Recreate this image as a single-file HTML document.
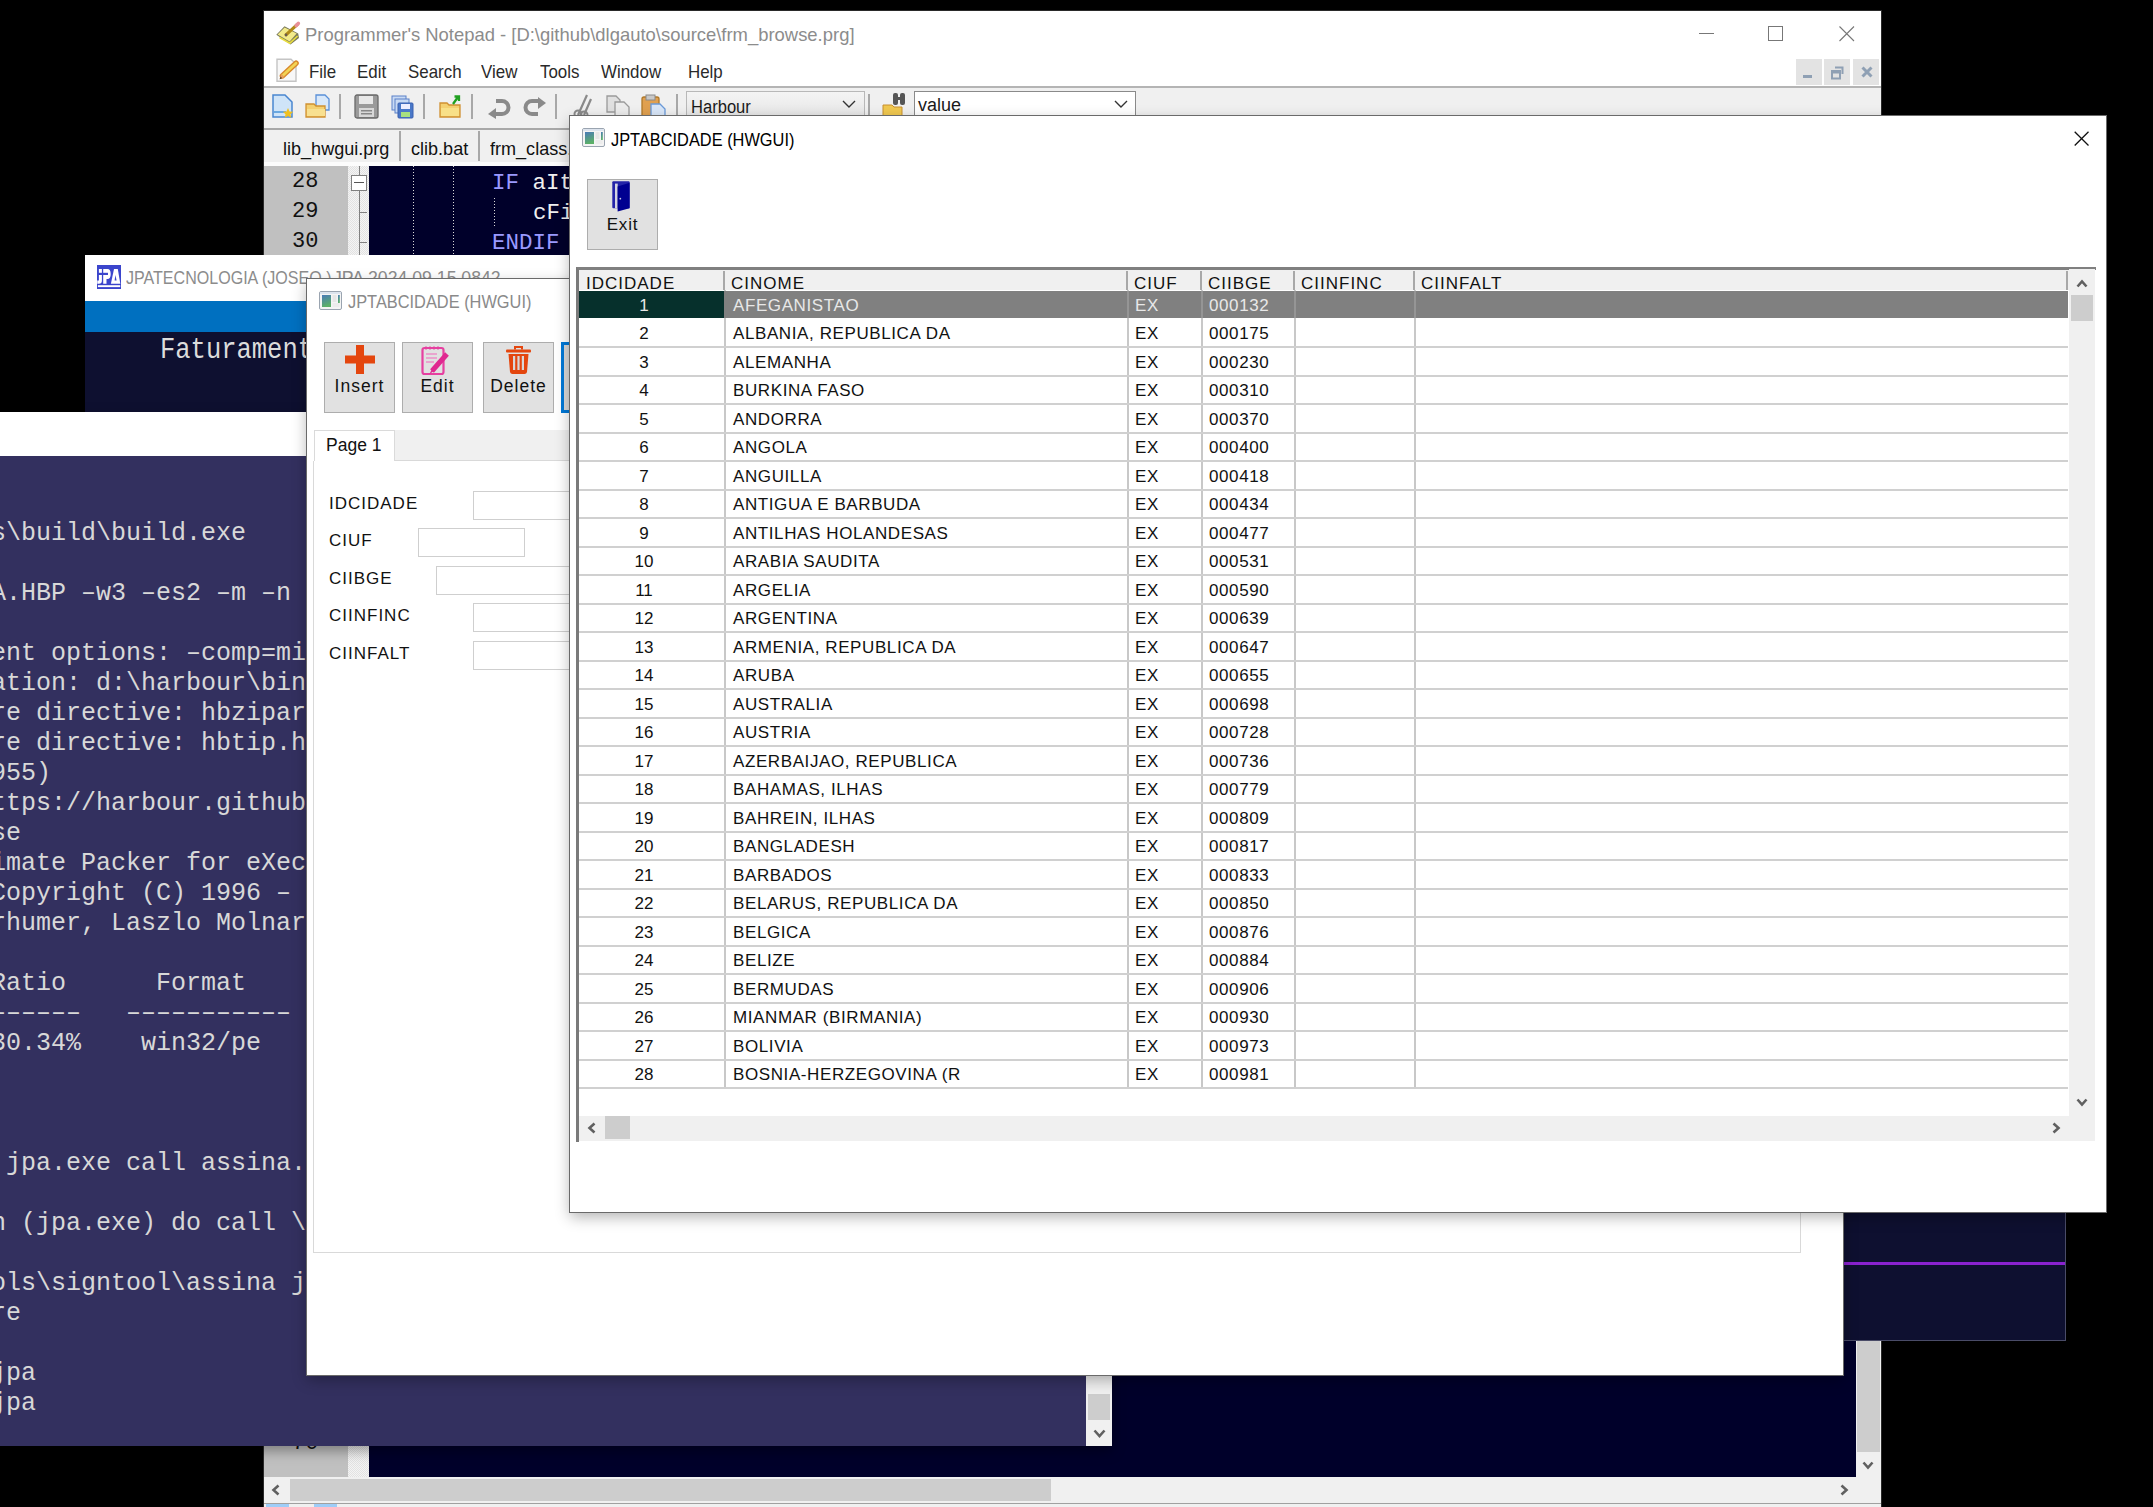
<!DOCTYPE html><html><head><meta charset="utf-8"><style>
*{margin:0;padding:0;box-sizing:border-box}
html,body{width:2153px;height:1507px;overflow:hidden;background:#000;font-family:"Liberation Sans",sans-serif}
.a{position:absolute}
.win{overflow:hidden}
.t{white-space:pre;line-height:1}
.m{font-family:Liberation Mono,monospace}
svg{position:absolute;overflow:visible}
</style></head><body><div class="a win" id="pn" style="left:264px;top:11px;width:1617px;height:1496px;background:#fff;box-shadow:0 0 0 1px #2a2a2a"><div class="a" style="left:12px;top:10px;"><svg width="26" height="26" viewBox="0 0 26 26">
<path d="M0.3 13.8 L8.5 5.2 L22.2 12.5 L23 17 L14.5 23.5 Z" fill="#7a7a5a"/>
<path d="M1.6 13.6 L8.6 6.6 L20.6 12.6 L13.6 20.6 Z" fill="#f2ea8a"/>
<path d="M3.5 16.5 L13.8 22.2 L21.6 15" stroke="#e8dc40" stroke-width="1.6" fill="none"/>
<path d="M10.2 13.6 L21.4 3.4" stroke="#b08a18" stroke-width="3.2" stroke-linecap="round"/>
<path d="M20.2 4.6 L22.3 2.4" stroke="#e89098" stroke-width="3.6" stroke-linecap="round"/>
<circle cx="10" cy="14" r="1.4" fill="#6a5a4a"/>
</svg></div><div class="a t" style="left:41px;top:14px;font-size:19px;color:#8c8c8c;transform:scaleX(0.97);transform-origin:0 0">Programmer's Notepad - [D:\github\dlgauto\source\frm_browse.prg]</div><div class="a" style="left:1435px;top:22px;width:15px;height:1px;background:#777"></div><div class="a" style="left:1504px;top:15px;width:15px;height:15px;border:1px solid #777"></div><div class="a" style="left:1575px;top:15px;"><svg width="16" height="16"><path d="M0.5 0.5 L15 15 M15 0.5 L0.5 15" stroke="#777" stroke-width="1.1"/></svg></div><div class="a" style="left:12px;top:47px;"><svg width="24" height="24" viewBox="0 0 24 24">
<path d="M1 1.2 H15 L20 6 V23.3 H1 Z" fill="#f8f8f8" stroke="#c4c4c4" stroke-width="1.4"/>
<path d="M6.5 17.8 L20 5.2" stroke="#d8882c" stroke-width="5.6" stroke-linecap="round"/>
<path d="M6.5 17.8 L20 5.2" stroke="#f2d454" stroke-width="2.8" stroke-linecap="round"/>
<path d="M3.6 21.2 L5.6 16 L8.6 19 Z" fill="#e8a060"/>
<path d="M3.6 21.2 L4.6 18.6 L6.2 20.2 Z" fill="#5a3a18"/>
</svg></div><div class="a t" style="left:45px;top:51px;font-size:19px;color:#2a2a2a;transform:scaleX(0.89);transform-origin:0 0">File</div><div class="a t" style="left:93px;top:51px;font-size:19px;color:#2a2a2a;transform:scaleX(0.89);transform-origin:0 0">Edit</div><div class="a t" style="left:144px;top:51px;font-size:19px;color:#2a2a2a;transform:scaleX(0.89);transform-origin:0 0">Search</div><div class="a t" style="left:217px;top:51px;font-size:19px;color:#2a2a2a;transform:scaleX(0.89);transform-origin:0 0">View</div><div class="a t" style="left:276px;top:51px;font-size:19px;color:#2a2a2a;transform:scaleX(0.89);transform-origin:0 0">Tools</div><div class="a t" style="left:337px;top:51px;font-size:19px;color:#2a2a2a;transform:scaleX(0.89);transform-origin:0 0">Window</div><div class="a t" style="left:424px;top:51px;font-size:19px;color:#2a2a2a;transform:scaleX(0.89);transform-origin:0 0">Help</div><div class="a" style="left:1532px;top:48px;width:26px;height:26px;background:#e3e3e3"></div><div class="a" style="left:1560px;top:48px;width:26px;height:26px;background:#e3e3e3"></div><div class="a" style="left:1589px;top:48px;width:26px;height:26px;background:#e3e3e3"></div><div class="a" style="left:1539px;top:64px;width:9px;height:3px;background:#8fa0b4"></div><div class="a" style="left:1567px;top:55px;"><svg width="14" height="14"><path d="M4 1.5 H11.5 V8" stroke="#8fa0b4" stroke-width="2" fill="none"/><rect x="1" y="5" width="8" height="7.5" stroke="#8fa0b4" stroke-width="2" fill="none"/><rect x="1" y="5" width="8" height="2.5" fill="#8fa0b4"/></svg></div><div class="a" style="left:1597px;top:55px;"><svg width="12" height="12"><path d="M1.5 1.5 L10.5 10.5 M10.5 1.5 L1.5 10.5" stroke="#8fa0b4" stroke-width="3"/></svg></div><div class="a" style="left:0px;top:75px;width:1617px;height:2px;background:#b4b4b4"></div><div class="a" style="left:0px;top:77px;width:1617px;height:41px;background:#f0f0f0"></div><div class="a" style="left:75px;top:83px;width:2px;height:25px;background:#a8a8a8"></div><div class="a" style="left:159px;top:83px;width:2px;height:25px;background:#a8a8a8"></div><div class="a" style="left:207px;top:83px;width:2px;height:25px;background:#a8a8a8"></div><div class="a" style="left:291px;top:83px;width:2px;height:25px;background:#a8a8a8"></div><div class="a" style="left:412px;top:83px;width:2px;height:25px;background:#a8a8a8"></div><div class="a" style="left:604px;top:83px;width:2px;height:25px;background:#a8a8a8"></div><div class="a" style="left:0px;top:77px;width:420px;height:40px">
<svg style="left:7px;top:6px" width="24" height="25" viewBox="0 0 24 25"><path d="M2 1 H14 L21 8 V23 H2 Z" fill="#cfe4f8" stroke="#4a86d0" stroke-width="1.5"/><rect x="3" y="17" width="12" height="2" fill="#6aa8e0"/><path d="M17 14 l1.6 3.4 3.6.4-2.7 2.4.8 3.6-3.3-1.9-3.3 1.9.8-3.6-2.7-2.4 3.6-.4z" fill="#f0c020"/></svg>
<svg style="left:41px;top:6px" width="26" height="25" viewBox="0 0 26 25"><path d="M11 1 H20 L24 5 V16 H11 Z" fill="#d8e8fa" stroke="#5a90d8" stroke-width="1.3"/><path d="M1 10 H9 L11 12 H20 V23 H1 Z" fill="#f4d070" stroke="#d09030" stroke-width="1.3"/><rect x="2" y="15" width="18" height="7" fill="#f8e090"/></svg>
<svg style="left:90px;top:6px" width="25" height="25" viewBox="0 0 25 25"><rect x="1" y="1" width="23" height="23" rx="2" fill="#9a9a9a" stroke="#6a6a6a" stroke-width="1.3"/><rect x="5" y="2" width="14" height="8" fill="#e8e8e8"/><rect x="5" y="14" width="15" height="9" fill="#d8d8d8"/><rect x="7" y="16" width="11" height="1.5" fill="#888"/><rect x="7" y="19" width="11" height="1.5" fill="#888"/></svg>
<svg style="left:127px;top:7px" width="23" height="24" viewBox="0 0 23 24"><rect x="1" y="1" width="14" height="14" fill="#c8daf4" stroke="#5a80c8"/><rect x="4" y="4" width="14" height="14" fill="#c8daf4" stroke="#5a80c8"/><rect x="7" y="8" width="15" height="15" rx="1" fill="#4a78c8" stroke="#3a60b0"/><rect x="10" y="9" width="9" height="5" fill="#eef"/><rect x="10" y="17" width="9" height="5" fill="#a8e080"/></svg>
<svg style="left:175px;top:6px" width="23" height="25" viewBox="0 0 23 25"><path d="M1 9 H8 L10 11 H21 V23 H1 Z" fill="#f4d070" stroke="#d09030" stroke-width="1.3"/><rect x="2" y="14" width="18" height="8" fill="#f8e088"/><path d="M14 10 L19 3 M15.5 2.5 H20 V7" stroke="#20a020" stroke-width="2.3" fill="none"/></svg>
<svg style="left:223px;top:9px" width="24" height="22" viewBox="0 0 24 22"><path d="M9 4 H15 A6.5 6.5 0 0 1 15 17 H8" stroke="#8a8a8a" stroke-width="4" fill="none"/><path d="M1 17 L9 11 V22 Z" fill="#8a8a8a"/></svg>
<svg style="left:259px;top:9px" width="24" height="22" viewBox="0 0 24 22"><path d="M16 4 H9 A6.5 6.5 0 0 0 9 17 H15" stroke="#8a8a8a" stroke-width="4" fill="none"/><path d="M23 4 L15 -2 V10 Z" fill="#8a8a8a" transform="translate(0,2)"/></svg>
<svg style="left:308px;top:5px" width="22" height="26" viewBox="0 0 22 26"><path d="M6 22 L15 2 M12 22 L19 6" stroke="#8a8a8a" stroke-width="2.2"/><circle cx="6" cy="21" r="3.5" fill="none" stroke="#8a8a8a" stroke-width="2"/><circle cx="12" cy="22" r="3.5" fill="none" stroke="#8a8a8a" stroke-width="2"/></svg>
<svg style="left:342px;top:7px" width="26" height="24" viewBox="0 0 26 24"><path d="M1 1 H10 L14 5 V17 H1 Z" fill="#e0e0e0" stroke="#9a9a9a" stroke-width="1.3"/><path d="M9 7 H18 L23 12 V24 H9 Z" fill="#ececec" stroke="#9a9a9a" stroke-width="1.3"/></svg>
<svg style="left:377px;top:6px" width="26" height="25" viewBox="0 0 26 25"><rect x="1" y="3" width="17" height="21" rx="2" fill="#e0a050" stroke="#b07828" stroke-width="1.3"/><rect x="5" y="1" width="9" height="5" fill="#c8c8c8" stroke="#8a8a8a"/><path d="M10 10 H19 L24 15 V25 H10 Z" fill="#d8e6f8" stroke="#6a9ad8" stroke-width="1.3"/></svg>
</div><div class="a" style="left:422px;top:80px;width:179px;height:30px;background:linear-gradient(#f4f4f4,#e4e4e4);border:1px solid #b8b8b8"></div><div class="a t" style="left:427px;top:87px;font-size:18px;color:#1a1a1a;transform:scaleX(0.92);transform-origin:0 0">Harbour</div><div class="a" style="left:578px;top:89px;"><svg width="14" height="9"><path d="M1 1 L7 7 L13 1" stroke="#333" stroke-width="1.4" fill="none"/></svg></div><div class="a" style="left:618px;top:80px;"><svg width="26" height="28" viewBox="0 0 26 28"><path d="M1 14 H10 L12 16 H20 V27 H1 Z" fill="#f0c850" stroke="#c89030"/><rect x="11" y="2" width="5" height="12" rx="2" fill="#555"/><rect x="18" y="2" width="5" height="12" rx="2" fill="#555"/><rect x="14" y="6" width="6" height="3" fill="#555"/></svg></div><div class="a" style="left:650px;top:80px;width:222px;height:30px;background:#fff;border:1px solid #8a8a8a"></div><div class="a t" style="left:654px;top:85px;font-size:18px;color:#1a1a1a">value</div><div class="a" style="left:850px;top:89px;"><svg width="14" height="9"><path d="M1 1 L7 7 L13 1" stroke="#333" stroke-width="1.4" fill="none"/></svg></div><div class="a" style="left:0px;top:117px;width:1617px;height:2px;background:#a8a8a8"></div><div class="a" style="left:0px;top:119px;width:1617px;height:32px;background:#f0f0f0"></div><div class="a" style="left:0px;top:151px;width:1617px;height:4px;background:#fcfcfc"></div><div class="a" style="left:135px;top:120px;width:2px;height:30px;background:#a8a8a8"></div><div class="a" style="left:214px;top:120px;width:2px;height:30px;background:#a8a8a8"></div><div class="a t" style="left:19px;top:128px;font-size:19px;color:#111;transform:scaleX(0.95);transform-origin:0 0">lib_hwgui.prg</div><div class="a t" style="left:147px;top:128px;font-size:19px;color:#111;transform:scaleX(0.95);transform-origin:0 0">clib.bat</div><div class="a t" style="left:226px;top:128px;font-size:19px;color:#111;transform:scaleX(0.95);transform-origin:0 0">frm_class.prg</div><div class="a" style="left:105px;top:155px;width:1487px;height:1311px;background:#00002a"></div><div class="a" style="left:0px;top:155px;width:84px;height:1311px;background:#c0c0c0"></div><div class="a" style="left:84px;top:155px;width:21px;height:1311px;background:repeating-conic-gradient(#f4f4f4 0 25%,#e2e2e2 0 50%) 0 0/2px 2px"></div><div class="a" style="left:95px;top:155px;width:1px;height:89px;background:#808080"></div><div class="a" style="left:87px;top:164px;width:16px;height:16px;background:#fff;border:1px solid #808080"></div><div class="a" style="left:90px;top:171px;width:10px;height:1px;background:#555"></div><div class="a" style="left:95px;top:201px;width:8px;height:1px;background:#808080"></div><div class="a" style="left:95px;top:231px;width:8px;height:1px;background:#808080"></div><div class="a t" style="left:28px;top:160px;font-size:22px;color:#111;font-family:Liberation Mono,monospace">28</div><div class="a t" style="left:28px;top:190px;font-size:22px;color:#111;font-family:Liberation Mono,monospace">29</div><div class="a t" style="left:28px;top:220px;font-size:22px;color:#111;font-family:Liberation Mono,monospace">30</div><div class="a t" style="left:28px;top:1422px;font-size:22px;color:#111;font-family:Liberation Mono,monospace">70</div><div class="a" style="left:149px;top:155px;width:1px;height:89px;background:repeating-linear-gradient(#d8d8d8 0 1px,transparent 1px 3px)"></div><div class="a" style="left:189px;top:155px;width:1px;height:89px;background:repeating-linear-gradient(#d8d8d8 0 1px,transparent 1px 3px)"></div><div class="a" style="left:230px;top:187px;width:1px;height:28px;background:repeating-linear-gradient(#d8d8d8 0 1px,transparent 1px 3px)"></div><div class="a t" style="left:228px;top:161px;font-size:22.5px;font-family:Liberation Mono,monospace"><span style="color:#9a9aff">IF</span> <span style="color:#f0f0f0">aItem</span></div><div class="a t" style="left:269px;top:191px;font-size:22.5px;font-family:Liberation Mono,monospace"><span style="color:#f0f0f0">cField</span></div><div class="a t" style="left:228px;top:221px;font-size:22.5px;font-family:Liberation Mono,monospace"><span style="color:#9a9aff">ENDIF</span></div><div class="a" style="left:1592px;top:155px;width:25px;height:1311px;background:#f0f0f0"></div><div class="a" style="left:1593px;top:155px;width:23px;height:1286px;background:#cdcdcd"></div><div class="a" style="left:1598px;top:1450px;"><svg width="12" height="9"><path d="M1.5 1.5 L6 6.5 L10.5 1.5" stroke="#606060" stroke-width="2.6" fill="none"/></svg></div><div class="a" style="left:0px;top:1466px;width:1592px;height:26px;background:#f0f0f0"></div><div class="a" style="left:26px;top:1468px;width:761px;height:22px;background:#cdcdcd"></div><div class="a" style="left:7px;top:1473px;"><svg width="9" height="12"><path d="M7.5 1.5 L2.5 6 L7.5 10.5" stroke="#606060" stroke-width="2.6" fill="none"/></svg></div><div class="a" style="left:1576px;top:1473px;"><svg width="9" height="12"><path d="M1.5 1.5 L6.5 6 L1.5 10.5" stroke="#606060" stroke-width="2.6" fill="none"/></svg></div><div class="a" style="left:1592px;top:1466px;width:25px;height:26px;background:#f0f0f0"></div><div class="a" style="left:0px;top:1492px;width:1617px;height:1px;background:#a0a0a0"></div><div class="a" style="left:0px;top:1493px;width:1617px;height:4px;background:#f0f0f0"></div><div class="a" style="left:2px;top:1493px;width:23px;height:4px;background:#9ecdf8"></div><div class="a" style="left:50px;top:1493px;width:23px;height:4px;background:#9ecdf8"></div></div>
<div class="a win" id="jpa" style="left:85px;top:255px;width:1981px;height:1086px;background:#0e1030;box-shadow:inset -1px -1px 0 #4a4c68"><div class="a" style="left:0px;top:0px;width:1981px;height:46px;background:#fff"></div><div class="a" style="left:12px;top:10px;"><svg width="24" height="24" viewBox="0 0 24 24"><rect width="24" height="24" fill="#3b45cc"/><path d="M1.9 3.9 H4.9 V15.5 Q4.9 18.8 2 18.8 H0.3 V15.5 H1.9 Z" fill="#fff"/><path d="M6.2 3.9 H10.5 Q13.7 3.9 13.7 8.9 Q13.7 14 10.5 14 H9.5 V18.8 H6.2 Z" fill="#fff"/><rect x="1" y="7.8" width="10" height="2.2" fill="#3b45cc"/><path d="M13.9 18.8 L17 3.9 H20.8 L23.3 18.8 Z" fill="#fff"/><path d="M18.4 10 L19.6 15.5 H17.6 Z" fill="#3b45cc"/><rect x="0.9" y="20.2" width="22.3" height="1.9" fill="#fff"/></svg></div><div class="a t" style="left:41px;top:13px;font-size:19px;color:#8c8c8c;transform:scaleX(0.845);transform-origin:0 0">JPATECNOLOGIA (JOSEQ )</div><div class="a t" style="left:248px;top:13px;font-size:19px;color:#8c8c8c;transform:scaleX(0.93);transform-origin:0 0">JPA 2024.09.15.0842</div><div class="a" style="left:0px;top:46px;width:1981px;height:31px;background:#0070c0"></div><div class="a t" style="left:75px;top:82px;font-size:25.5px;color:#dcdcdc;font-family:Liberation Mono,monospace;transform:scale(1,1.13);transform-origin:0 0">Faturamento</div><div class="a" style="left:0px;top:1007px;width:1980px;height:3px;background:#8a22d0"></div></div>
<div class="a win" id="term" style="left:0px;top:412px;width:1112px;height:1034px;background:#33305f;box-shadow:0 5px 12px rgba(0,0,0,.35)"><div class="a" style="left:0px;top:0px;width:1112px;height:44px;background:#fff"></div><div class="a t" style="left:-9px;top:107px;font-size:25px;line-height:30px;color:#d8d8d8;font-family:Liberation Mono,monospace">s\build\build.exe</div><div class="a t" style="left:-9px;top:167px;font-size:25px;line-height:30px;color:#d8d8d8;font-family:Liberation Mono,monospace">A.HBP –w3 –es2 –m –n</div><div class="a t" style="left:-9px;top:227px;font-size:25px;line-height:30px;color:#d8d8d8;font-family:Liberation Mono,monospace">ent options: –comp=mingw</div><div class="a t" style="left:-9px;top:257px;font-size:25px;line-height:30px;color:#d8d8d8;font-family:Liberation Mono,monospace">ation: d:\harbour\bin</div><div class="a t" style="left:-9px;top:287px;font-size:25px;line-height:30px;color:#d8d8d8;font-family:Liberation Mono,monospace">re directive: hbzipar</div><div class="a t" style="left:-9px;top:317px;font-size:25px;line-height:30px;color:#d8d8d8;font-family:Liberation Mono,monospace">re directive: hbtip.h</div><div class="a t" style="left:-9px;top:347px;font-size:25px;line-height:30px;color:#d8d8d8;font-family:Liberation Mono,monospace">955)</div><div class="a t" style="left:-9px;top:377px;font-size:25px;line-height:30px;color:#d8d8d8;font-family:Liberation Mono,monospace">ttps://harbour.github</div><div class="a t" style="left:-9px;top:407px;font-size:25px;line-height:30px;color:#d8d8d8;font-family:Liberation Mono,monospace">se</div><div class="a t" style="left:-9px;top:437px;font-size:25px;line-height:30px;color:#d8d8d8;font-family:Liberation Mono,monospace">imate Packer for eXec</div><div class="a t" style="left:-9px;top:467px;font-size:25px;line-height:30px;color:#d8d8d8;font-family:Liberation Mono,monospace">Copyright (C) 1996 –</div><div class="a t" style="left:-9px;top:497px;font-size:25px;line-height:30px;color:#d8d8d8;font-family:Liberation Mono,monospace">rhumer, Laszlo Molnar</div><div class="a t" style="left:-9px;top:557px;font-size:25px;line-height:30px;color:#d8d8d8;font-family:Liberation Mono,monospace">Ratio      Format</div><div class="a t" style="left:-9px;top:587px;font-size:25px;line-height:30px;color:#d8d8d8;font-family:Liberation Mono,monospace">––––––   –––––––––––</div><div class="a t" style="left:-9px;top:617px;font-size:25px;line-height:30px;color:#d8d8d8;font-family:Liberation Mono,monospace">30.34%    win32/pe</div><div class="a t" style="left:-9px;top:737px;font-size:25px;line-height:30px;color:#d8d8d8;font-family:Liberation Mono,monospace"> jpa.exe call assina.</div><div class="a t" style="left:-9px;top:797px;font-size:25px;line-height:30px;color:#d8d8d8;font-family:Liberation Mono,monospace">n (jpa.exe) do call \</div><div class="a t" style="left:-9px;top:857px;font-size:25px;line-height:30px;color:#d8d8d8;font-family:Liberation Mono,monospace">ols\signtool\assina j</div><div class="a t" style="left:-9px;top:887px;font-size:25px;line-height:30px;color:#d8d8d8;font-family:Liberation Mono,monospace">re</div><div class="a t" style="left:-9px;top:947px;font-size:25px;line-height:30px;color:#d8d8d8;font-family:Liberation Mono,monospace">jpa</div><div class="a t" style="left:-9px;top:977px;font-size:25px;line-height:30px;color:#d8d8d8;font-family:Liberation Mono,monospace">jpa</div><div class="a" style="left:1086px;top:963px;width:26px;height:71px;background:#f0f0f0"></div><div class="a" style="left:1088px;top:982px;width:22px;height:26px;background:#cdcdcd"></div><div class="a" style="left:1093px;top:1017px;"><svg width="13" height="10"><path d="M1.5 1.5 L6.5 7 L11.5 1.5" stroke="#606060" stroke-width="2.6" fill="none"/></svg></div></div>
<div class="a win" id="back" style="left:307px;top:279px;width:1536px;height:1096px;background:#fff;box-shadow:0 0 0 1px #6a6a6a, 0 5px 14px rgba(0,0,0,.3)"><div class="a" style="left:12px;top:12px;"><svg width="23" height="19" viewBox="0 0 23 19"><rect x="0.5" y="0.5" width="22" height="18" rx="1.5" fill="#f4f4f4" stroke="#9aa4b0"/><defs><linearGradient id="ig" x1="0" y1="0" x2="0.3" y2="1"><stop offset="0" stop-color="#4a7ab8"/><stop offset="1" stop-color="#5cb068"/></linearGradient></defs><rect x="1" y="1" width="21" height="2" fill="#dde4ee"/><rect x="3" y="4" width="9" height="12" fill="url(#ig)"/><rect x="13.5" y="4" width="4" height="7" fill="#e6e6e6"/><rect x="19" y="4" width="1.8" height="8" fill="url(#ig)"/><rect x="13.5" y="12" width="7" height="4" fill="#ececec"/></svg></div><div class="a t" style="left:41px;top:14px;font-size:18.5px;color:#8a8a8a;transform:scaleX(0.885);transform-origin:0 0">JPTABCIDADE (HWGUI)</div><div class="a" style="left:17px;top:63px;width:71px;height:71px;background:#e1e1e1;border:1px solid #adadad"></div><div class="a" style="left:17px;top:66px;width:71px;height:32px"><svg style="left:21px;top:0" width="30" height="30"><rect x="11" y="0" width="8" height="29" fill="#e4460e"/><rect x="0" y="10.5" width="30" height="8" fill="#e4460e"/></svg></div><div class="a t" style="left:17px;top:99px;font-size:17.5px;color:#111;width:71px;text-align:center;letter-spacing:1px">Insert</div><div class="a" style="left:95px;top:63px;width:71px;height:71px;background:#e1e1e1;border:1px solid #adadad"></div><div class="a" style="left:95px;top:66px;width:71px;height:32px"><svg style="left:19px;top:0" width="32" height="32" viewBox="0 0 32 32"><rect x="1.5" y="3" width="21" height="26" rx="2" fill="none" stroke="#e640a0" stroke-width="2.2"/><path d="M5 1.5 v3 M9 1.5 v3 M13 1.5 v3 M17 1.5 v3" stroke="#e640a0" stroke-width="1.6"/><path d="M5 9 h11 M5 13 h11 M5 17 h8" stroke="#ec90c8" stroke-width="1.6"/><path d="M11 26 L26 9" stroke="#e02890" stroke-width="5"/><path d="M8.5 29 L11 24 L13 26 Z" fill="#e02890"/></svg></div><div class="a t" style="left:95px;top:99px;font-size:17.5px;color:#111;width:71px;text-align:center;letter-spacing:1px">Edit</div><div class="a" style="left:176px;top:63px;width:71px;height:71px;background:#e1e1e1;border:1px solid #adadad"></div><div class="a" style="left:176px;top:66px;width:71px;height:32px"><svg style="left:22px;top:0" width="28" height="30" viewBox="0 0 28 30"><rect x="1" y="4.5" width="25" height="3" rx="1" fill="#e4460e"/><path d="M10 4.5 v-2.5 h7 v2.5" stroke="#e4460e" stroke-width="2" fill="none"/><path d="M3.5 9 H23.5 L22 27 Q21.5 29 19.5 29 H7.5 Q5.5 29 5 27 Z" fill="#e4460e"/><rect x="8" y="11" width="2.2" height="14" fill="#d8d8d8"/><rect x="12.4" y="11" width="2.2" height="14" fill="#d8d8d8"/><rect x="16.8" y="11" width="2.2" height="14" fill="#d8d8d8"/></svg></div><div class="a t" style="left:176px;top:99px;font-size:17.5px;color:#111;width:71px;text-align:center;letter-spacing:1px">Delete</div><div class="a" style="left:254px;top:63px;width:71px;height:71px;background:#d9d9d9;border:3px solid #0078d7"></div><div class="a" style="left:7px;top:151px;width:1486px;height:31px;background:#f0f0f0"></div><div class="a" style="left:7px;top:151px;width:81px;height:32px;background:#fff;border:1px solid #dadada;border-bottom:none"></div><div class="a t" style="left:19px;top:158px;font-size:17.5px;color:#111">Page 1</div><div class="a" style="left:6px;top:182px;width:1488px;height:792px;background:#fff;border:1px solid #d9d9d9;border-top:none"></div><div class="a" style="left:88px;top:181px;width:1406px;height:1px;background:#d9d9d9"></div><div class="a t" style="left:22px;top:215.5px;font-size:17px;color:#111;letter-spacing:1px">IDCIDADE</div><div class="a" style="left:166px;top:211.5px;width:600px;height:29px;background:#fff;border:1.5px solid #cfcfcf"></div><div class="a t" style="left:22px;top:253.0px;font-size:17px;color:#111;letter-spacing:1px">CIUF</div><div class="a" style="left:111px;top:249.0px;width:107px;height:29px;background:#fff;border:1.5px solid #cfcfcf"></div><div class="a t" style="left:22px;top:290.5px;font-size:17px;color:#111;letter-spacing:1px">CIIBGE</div><div class="a" style="left:129px;top:286.5px;width:600px;height:29px;background:#fff;border:1.5px solid #cfcfcf"></div><div class="a t" style="left:22px;top:328.0px;font-size:17px;color:#111;letter-spacing:1px">CIINFINC</div><div class="a" style="left:166px;top:324.0px;width:600px;height:29px;background:#fff;border:1.5px solid #cfcfcf"></div><div class="a t" style="left:22px;top:365.5px;font-size:17px;color:#111;letter-spacing:1px">CIINFALT</div><div class="a" style="left:166px;top:361.5px;width:600px;height:29px;background:#fff;border:1.5px solid #cfcfcf"></div></div>
<div class="a win" id="front" style="left:570px;top:116px;width:1536px;height:1096px;background:#fff;box-shadow:0 0 0 1px #6a6a6a, 0 5px 14px rgba(0,0,0,.3)"><div class="a" style="left:12px;top:12px;"><svg width="23" height="19" viewBox="0 0 23 19"><rect x="0.5" y="0.5" width="22" height="18" rx="1.5" fill="#f4f4f4" stroke="#9aa4b0"/><defs><linearGradient id="ig" x1="0" y1="0" x2="0.3" y2="1"><stop offset="0" stop-color="#4a7ab8"/><stop offset="1" stop-color="#5cb068"/></linearGradient></defs><rect x="1" y="1" width="21" height="2" fill="#dde4ee"/><rect x="3" y="4" width="9" height="12" fill="url(#ig)"/><rect x="13.5" y="4" width="4" height="7" fill="#e6e6e6"/><rect x="19" y="4" width="1.8" height="8" fill="url(#ig)"/><rect x="13.5" y="12" width="7" height="4" fill="#ececec"/></svg></div><div class="a t" style="left:41px;top:15px;font-size:18.5px;color:#000;transform:scaleX(0.885);transform-origin:0 0">JPTABCIDADE (HWGUI)</div><div class="a" style="left:1504px;top:15px;"><svg width="16" height="16"><path d="M0.7 0.7 L14.5 14.5 M14.5 0.7 L0.7 14.5" stroke="#111" stroke-width="1.3"/></svg></div><div class="a" style="left:17px;top:63px;width:71px;height:71px;background:#e1e1e1;border:1px solid #adadad"></div><div class="a" style="left:17px;top:65px;width:71px;height:32px"><svg style="left:25px;top:0" width="20" height="32" viewBox="0 0 20 32"><rect x="0.3" y="0.3" width="17.3" height="27" rx="1" fill="#2424a8"/><rect x="3" y="2.6" width="2.7" height="24.6" fill="#d4d4e2"/><path d="M5.6 5.4 L17.6 1.8 V27.2 L5.6 30.4 Z" fill="#000090"/><circle cx="8.3" cy="17.7" r="0.9" fill="#c8c8e0"/></svg></div><div class="a t" style="left:17px;top:100px;font-size:17px;color:#111;width:71px;text-align:center;letter-spacing:0.8px">Exit</div><div class="a" style="left:6px;top:151px;width:1520px;height:875px;background:#fff;border-top:3px solid #808080;border-left:3px solid #7a7a7a"></div><div class="a" style="left:9px;top:154px;width:1490px;height:20px;background:#f0f0f0"></div><div class="a t" style="left:16px;top:158.5px;font-size:17px;color:#111;letter-spacing:1px">IDCIDADE</div><div class="a t" style="left:161px;top:158.5px;font-size:17px;color:#111;letter-spacing:1px">CINOME</div><div class="a t" style="left:564px;top:158.5px;font-size:17px;color:#111;letter-spacing:1px">CIUF</div><div class="a t" style="left:638px;top:158.5px;font-size:17px;color:#111;letter-spacing:1px">CIIBGE</div><div class="a t" style="left:731px;top:158.5px;font-size:17px;color:#111;letter-spacing:1px">CIINFINC</div><div class="a t" style="left:851px;top:158.5px;font-size:17px;color:#111;letter-spacing:1px">CIINFALT</div><div class="a" style="left:153px;top:155px;width:2px;height:19px;background:#a8a8a8"></div><div class="a" style="left:556px;top:155px;width:2px;height:19px;background:#a8a8a8"></div><div class="a" style="left:630px;top:155px;width:2px;height:19px;background:#a8a8a8"></div><div class="a" style="left:723px;top:155px;width:2px;height:19px;background:#a8a8a8"></div><div class="a" style="left:843px;top:155px;width:2px;height:19px;background:#a8a8a8"></div><div class="a" style="left:1496px;top:155px;width:2px;height:19px;background:#a8a8a8"></div><div class="a" style="left:154px;top:174px;width:2px;height:798px;background:#c8c8c8"></div><div class="a" style="left:557px;top:174px;width:2px;height:798px;background:#c8c8c8"></div><div class="a" style="left:631px;top:174px;width:2px;height:798px;background:#c8c8c8"></div><div class="a" style="left:724px;top:174px;width:2px;height:798px;background:#c8c8c8"></div><div class="a" style="left:844px;top:174px;width:2px;height:798px;background:#c8c8c8"></div><div class="a" style="left:9px;top:175px;width:1489px;height:27px;background:#808080"></div><div class="a" style="left:9px;top:175px;width:145px;height:27px;background:#06302c"></div><div class="a t" style="left:9px;top:180.5px;font-size:17px;color:#e8e8e8;width:130px;text-align:center">1</div><div class="a t" style="left:163px;top:180.5px;font-size:17px;color:#e8e8e8;letter-spacing:0.6px">AFEGANISTAO</div><div class="a t" style="left:565px;top:180.5px;font-size:17px;color:#e8e8e8;letter-spacing:0.6px">EX</div><div class="a t" style="left:639px;top:180.5px;font-size:17px;color:#e8e8e8;letter-spacing:0.6px">000132</div><div class="a" style="left:9px;top:230px;width:1489px;height:2px;background:#d0d0d0"></div><div class="a t" style="left:9px;top:209.0px;font-size:17px;color:#111;width:130px;text-align:center">2</div><div class="a t" style="left:163px;top:209.0px;font-size:17px;color:#111;letter-spacing:0.6px">ALBANIA, REPUBLICA DA</div><div class="a t" style="left:565px;top:209.0px;font-size:17px;color:#111;letter-spacing:0.6px">EX</div><div class="a t" style="left:639px;top:209.0px;font-size:17px;color:#111;letter-spacing:0.6px">000175</div><div class="a" style="left:9px;top:259px;width:1489px;height:2px;background:#d0d0d0"></div><div class="a t" style="left:9px;top:237.5px;font-size:17px;color:#111;width:130px;text-align:center">3</div><div class="a t" style="left:163px;top:237.5px;font-size:17px;color:#111;letter-spacing:0.6px">ALEMANHA</div><div class="a t" style="left:565px;top:237.5px;font-size:17px;color:#111;letter-spacing:0.6px">EX</div><div class="a t" style="left:639px;top:237.5px;font-size:17px;color:#111;letter-spacing:0.6px">000230</div><div class="a" style="left:9px;top:287px;width:1489px;height:2px;background:#d0d0d0"></div><div class="a t" style="left:9px;top:266.0px;font-size:17px;color:#111;width:130px;text-align:center">4</div><div class="a t" style="left:163px;top:266.0px;font-size:17px;color:#111;letter-spacing:0.6px">BURKINA FASO</div><div class="a t" style="left:565px;top:266.0px;font-size:17px;color:#111;letter-spacing:0.6px">EX</div><div class="a t" style="left:639px;top:266.0px;font-size:17px;color:#111;letter-spacing:0.6px">000310</div><div class="a" style="left:9px;top:316px;width:1489px;height:2px;background:#d0d0d0"></div><div class="a t" style="left:9px;top:294.5px;font-size:17px;color:#111;width:130px;text-align:center">5</div><div class="a t" style="left:163px;top:294.5px;font-size:17px;color:#111;letter-spacing:0.6px">ANDORRA</div><div class="a t" style="left:565px;top:294.5px;font-size:17px;color:#111;letter-spacing:0.6px">EX</div><div class="a t" style="left:639px;top:294.5px;font-size:17px;color:#111;letter-spacing:0.6px">000370</div><div class="a" style="left:9px;top:344px;width:1489px;height:2px;background:#d0d0d0"></div><div class="a t" style="left:9px;top:323.0px;font-size:17px;color:#111;width:130px;text-align:center">6</div><div class="a t" style="left:163px;top:323.0px;font-size:17px;color:#111;letter-spacing:0.6px">ANGOLA</div><div class="a t" style="left:565px;top:323.0px;font-size:17px;color:#111;letter-spacing:0.6px">EX</div><div class="a t" style="left:639px;top:323.0px;font-size:17px;color:#111;letter-spacing:0.6px">000400</div><div class="a" style="left:9px;top:373px;width:1489px;height:2px;background:#d0d0d0"></div><div class="a t" style="left:9px;top:351.5px;font-size:17px;color:#111;width:130px;text-align:center">7</div><div class="a t" style="left:163px;top:351.5px;font-size:17px;color:#111;letter-spacing:0.6px">ANGUILLA</div><div class="a t" style="left:565px;top:351.5px;font-size:17px;color:#111;letter-spacing:0.6px">EX</div><div class="a t" style="left:639px;top:351.5px;font-size:17px;color:#111;letter-spacing:0.6px">000418</div><div class="a" style="left:9px;top:401px;width:1489px;height:2px;background:#d0d0d0"></div><div class="a t" style="left:9px;top:380.0px;font-size:17px;color:#111;width:130px;text-align:center">8</div><div class="a t" style="left:163px;top:380.0px;font-size:17px;color:#111;letter-spacing:0.6px">ANTIGUA E BARBUDA</div><div class="a t" style="left:565px;top:380.0px;font-size:17px;color:#111;letter-spacing:0.6px">EX</div><div class="a t" style="left:639px;top:380.0px;font-size:17px;color:#111;letter-spacing:0.6px">000434</div><div class="a" style="left:9px;top:430px;width:1489px;height:2px;background:#d0d0d0"></div><div class="a t" style="left:9px;top:408.5px;font-size:17px;color:#111;width:130px;text-align:center">9</div><div class="a t" style="left:163px;top:408.5px;font-size:17px;color:#111;letter-spacing:0.6px">ANTILHAS HOLANDESAS</div><div class="a t" style="left:565px;top:408.5px;font-size:17px;color:#111;letter-spacing:0.6px">EX</div><div class="a t" style="left:639px;top:408.5px;font-size:17px;color:#111;letter-spacing:0.6px">000477</div><div class="a" style="left:9px;top:458px;width:1489px;height:2px;background:#d0d0d0"></div><div class="a t" style="left:9px;top:437.0px;font-size:17px;color:#111;width:130px;text-align:center">10</div><div class="a t" style="left:163px;top:437.0px;font-size:17px;color:#111;letter-spacing:0.6px">ARABIA SAUDITA</div><div class="a t" style="left:565px;top:437.0px;font-size:17px;color:#111;letter-spacing:0.6px">EX</div><div class="a t" style="left:639px;top:437.0px;font-size:17px;color:#111;letter-spacing:0.6px">000531</div><div class="a" style="left:9px;top:487px;width:1489px;height:2px;background:#d0d0d0"></div><div class="a t" style="left:9px;top:465.5px;font-size:17px;color:#111;width:130px;text-align:center">11</div><div class="a t" style="left:163px;top:465.5px;font-size:17px;color:#111;letter-spacing:0.6px">ARGELIA</div><div class="a t" style="left:565px;top:465.5px;font-size:17px;color:#111;letter-spacing:0.6px">EX</div><div class="a t" style="left:639px;top:465.5px;font-size:17px;color:#111;letter-spacing:0.6px">000590</div><div class="a" style="left:9px;top:515px;width:1489px;height:2px;background:#d0d0d0"></div><div class="a t" style="left:9px;top:494.0px;font-size:17px;color:#111;width:130px;text-align:center">12</div><div class="a t" style="left:163px;top:494.0px;font-size:17px;color:#111;letter-spacing:0.6px">ARGENTINA</div><div class="a t" style="left:565px;top:494.0px;font-size:17px;color:#111;letter-spacing:0.6px">EX</div><div class="a t" style="left:639px;top:494.0px;font-size:17px;color:#111;letter-spacing:0.6px">000639</div><div class="a" style="left:9px;top:544px;width:1489px;height:2px;background:#d0d0d0"></div><div class="a t" style="left:9px;top:522.5px;font-size:17px;color:#111;width:130px;text-align:center">13</div><div class="a t" style="left:163px;top:522.5px;font-size:17px;color:#111;letter-spacing:0.6px">ARMENIA, REPUBLICA DA</div><div class="a t" style="left:565px;top:522.5px;font-size:17px;color:#111;letter-spacing:0.6px">EX</div><div class="a t" style="left:639px;top:522.5px;font-size:17px;color:#111;letter-spacing:0.6px">000647</div><div class="a" style="left:9px;top:572px;width:1489px;height:2px;background:#d0d0d0"></div><div class="a t" style="left:9px;top:551.0px;font-size:17px;color:#111;width:130px;text-align:center">14</div><div class="a t" style="left:163px;top:551.0px;font-size:17px;color:#111;letter-spacing:0.6px">ARUBA</div><div class="a t" style="left:565px;top:551.0px;font-size:17px;color:#111;letter-spacing:0.6px">EX</div><div class="a t" style="left:639px;top:551.0px;font-size:17px;color:#111;letter-spacing:0.6px">000655</div><div class="a" style="left:9px;top:601px;width:1489px;height:2px;background:#d0d0d0"></div><div class="a t" style="left:9px;top:579.5px;font-size:17px;color:#111;width:130px;text-align:center">15</div><div class="a t" style="left:163px;top:579.5px;font-size:17px;color:#111;letter-spacing:0.6px">AUSTRALIA</div><div class="a t" style="left:565px;top:579.5px;font-size:17px;color:#111;letter-spacing:0.6px">EX</div><div class="a t" style="left:639px;top:579.5px;font-size:17px;color:#111;letter-spacing:0.6px">000698</div><div class="a" style="left:9px;top:629px;width:1489px;height:2px;background:#d0d0d0"></div><div class="a t" style="left:9px;top:608.0px;font-size:17px;color:#111;width:130px;text-align:center">16</div><div class="a t" style="left:163px;top:608.0px;font-size:17px;color:#111;letter-spacing:0.6px">AUSTRIA</div><div class="a t" style="left:565px;top:608.0px;font-size:17px;color:#111;letter-spacing:0.6px">EX</div><div class="a t" style="left:639px;top:608.0px;font-size:17px;color:#111;letter-spacing:0.6px">000728</div><div class="a" style="left:9px;top:658px;width:1489px;height:2px;background:#d0d0d0"></div><div class="a t" style="left:9px;top:636.5px;font-size:17px;color:#111;width:130px;text-align:center">17</div><div class="a t" style="left:163px;top:636.5px;font-size:17px;color:#111;letter-spacing:0.6px">AZERBAIJAO, REPUBLICA</div><div class="a t" style="left:565px;top:636.5px;font-size:17px;color:#111;letter-spacing:0.6px">EX</div><div class="a t" style="left:639px;top:636.5px;font-size:17px;color:#111;letter-spacing:0.6px">000736</div><div class="a" style="left:9px;top:686px;width:1489px;height:2px;background:#d0d0d0"></div><div class="a t" style="left:9px;top:665.0px;font-size:17px;color:#111;width:130px;text-align:center">18</div><div class="a t" style="left:163px;top:665.0px;font-size:17px;color:#111;letter-spacing:0.6px">BAHAMAS, ILHAS</div><div class="a t" style="left:565px;top:665.0px;font-size:17px;color:#111;letter-spacing:0.6px">EX</div><div class="a t" style="left:639px;top:665.0px;font-size:17px;color:#111;letter-spacing:0.6px">000779</div><div class="a" style="left:9px;top:715px;width:1489px;height:2px;background:#d0d0d0"></div><div class="a t" style="left:9px;top:693.5px;font-size:17px;color:#111;width:130px;text-align:center">19</div><div class="a t" style="left:163px;top:693.5px;font-size:17px;color:#111;letter-spacing:0.6px">BAHREIN, ILHAS</div><div class="a t" style="left:565px;top:693.5px;font-size:17px;color:#111;letter-spacing:0.6px">EX</div><div class="a t" style="left:639px;top:693.5px;font-size:17px;color:#111;letter-spacing:0.6px">000809</div><div class="a" style="left:9px;top:743px;width:1489px;height:2px;background:#d0d0d0"></div><div class="a t" style="left:9px;top:722.0px;font-size:17px;color:#111;width:130px;text-align:center">20</div><div class="a t" style="left:163px;top:722.0px;font-size:17px;color:#111;letter-spacing:0.6px">BANGLADESH</div><div class="a t" style="left:565px;top:722.0px;font-size:17px;color:#111;letter-spacing:0.6px">EX</div><div class="a t" style="left:639px;top:722.0px;font-size:17px;color:#111;letter-spacing:0.6px">000817</div><div class="a" style="left:9px;top:772px;width:1489px;height:2px;background:#d0d0d0"></div><div class="a t" style="left:9px;top:750.5px;font-size:17px;color:#111;width:130px;text-align:center">21</div><div class="a t" style="left:163px;top:750.5px;font-size:17px;color:#111;letter-spacing:0.6px">BARBADOS</div><div class="a t" style="left:565px;top:750.5px;font-size:17px;color:#111;letter-spacing:0.6px">EX</div><div class="a t" style="left:639px;top:750.5px;font-size:17px;color:#111;letter-spacing:0.6px">000833</div><div class="a" style="left:9px;top:800px;width:1489px;height:2px;background:#d0d0d0"></div><div class="a t" style="left:9px;top:779.0px;font-size:17px;color:#111;width:130px;text-align:center">22</div><div class="a t" style="left:163px;top:779.0px;font-size:17px;color:#111;letter-spacing:0.6px">BELARUS, REPUBLICA DA</div><div class="a t" style="left:565px;top:779.0px;font-size:17px;color:#111;letter-spacing:0.6px">EX</div><div class="a t" style="left:639px;top:779.0px;font-size:17px;color:#111;letter-spacing:0.6px">000850</div><div class="a" style="left:9px;top:829px;width:1489px;height:2px;background:#d0d0d0"></div><div class="a t" style="left:9px;top:807.5px;font-size:17px;color:#111;width:130px;text-align:center">23</div><div class="a t" style="left:163px;top:807.5px;font-size:17px;color:#111;letter-spacing:0.6px">BELGICA</div><div class="a t" style="left:565px;top:807.5px;font-size:17px;color:#111;letter-spacing:0.6px">EX</div><div class="a t" style="left:639px;top:807.5px;font-size:17px;color:#111;letter-spacing:0.6px">000876</div><div class="a" style="left:9px;top:857px;width:1489px;height:2px;background:#d0d0d0"></div><div class="a t" style="left:9px;top:836.0px;font-size:17px;color:#111;width:130px;text-align:center">24</div><div class="a t" style="left:163px;top:836.0px;font-size:17px;color:#111;letter-spacing:0.6px">BELIZE</div><div class="a t" style="left:565px;top:836.0px;font-size:17px;color:#111;letter-spacing:0.6px">EX</div><div class="a t" style="left:639px;top:836.0px;font-size:17px;color:#111;letter-spacing:0.6px">000884</div><div class="a" style="left:9px;top:886px;width:1489px;height:2px;background:#d0d0d0"></div><div class="a t" style="left:9px;top:864.5px;font-size:17px;color:#111;width:130px;text-align:center">25</div><div class="a t" style="left:163px;top:864.5px;font-size:17px;color:#111;letter-spacing:0.6px">BERMUDAS</div><div class="a t" style="left:565px;top:864.5px;font-size:17px;color:#111;letter-spacing:0.6px">EX</div><div class="a t" style="left:639px;top:864.5px;font-size:17px;color:#111;letter-spacing:0.6px">000906</div><div class="a" style="left:9px;top:914px;width:1489px;height:2px;background:#d0d0d0"></div><div class="a t" style="left:9px;top:893.0px;font-size:17px;color:#111;width:130px;text-align:center">26</div><div class="a t" style="left:163px;top:893.0px;font-size:17px;color:#111;letter-spacing:0.6px">MIANMAR (BIRMANIA)</div><div class="a t" style="left:565px;top:893.0px;font-size:17px;color:#111;letter-spacing:0.6px">EX</div><div class="a t" style="left:639px;top:893.0px;font-size:17px;color:#111;letter-spacing:0.6px">000930</div><div class="a" style="left:9px;top:943px;width:1489px;height:2px;background:#d0d0d0"></div><div class="a t" style="left:9px;top:921.5px;font-size:17px;color:#111;width:130px;text-align:center">27</div><div class="a t" style="left:163px;top:921.5px;font-size:17px;color:#111;letter-spacing:0.6px">BOLIVIA</div><div class="a t" style="left:565px;top:921.5px;font-size:17px;color:#111;letter-spacing:0.6px">EX</div><div class="a t" style="left:639px;top:921.5px;font-size:17px;color:#111;letter-spacing:0.6px">000973</div><div class="a" style="left:9px;top:971px;width:1489px;height:2px;background:#d0d0d0"></div><div class="a t" style="left:9px;top:950.0px;font-size:17px;color:#111;width:130px;text-align:center">28</div><div class="a t" style="left:163px;top:950.0px;font-size:17px;color:#111;letter-spacing:0.6px">BOSNIA-HERZEGOVINA (R</div><div class="a t" style="left:565px;top:950.0px;font-size:17px;color:#111;letter-spacing:0.6px">EX</div><div class="a t" style="left:639px;top:950.0px;font-size:17px;color:#111;letter-spacing:0.6px">000981</div><div class="a" style="left:557px;top:175px;width:1.5px;height:27px;background:#959595"></div><div class="a" style="left:631px;top:175px;width:1.5px;height:27px;background:#959595"></div><div class="a" style="left:724px;top:175px;width:1.5px;height:27px;background:#959595"></div><div class="a" style="left:844px;top:175px;width:1.5px;height:27px;background:#959595"></div><div class="a" style="left:1499px;top:153px;width:26px;height:847px;background:#f0f0f0"></div><div class="a" style="left:1501px;top:179px;width:22px;height:26px;background:#cdcdcd"></div><div class="a" style="left:1506px;top:162px;"><svg width="12" height="10"><path d="M1.5 8.5 L6 3.5 L10.5 8.5" stroke="#606060" stroke-width="2.6" fill="none"/></svg></div><div class="a" style="left:1506px;top:982px;"><svg width="12" height="10"><path d="M1.5 1.5 L6 6.5 L10.5 1.5" stroke="#606060" stroke-width="2.6" fill="none"/></svg></div><div class="a" style="left:9px;top:1000px;width:1516px;height:25px;background:#f0f0f0"></div><div class="a" style="left:35px;top:1000px;width:25px;height:23px;background:#cdcdcd"></div><div class="a" style="left:16px;top:1006px;"><svg width="10" height="12"><path d="M8.5 1.5 L3.5 6 L8.5 10.5" stroke="#606060" stroke-width="2.6" fill="none"/></svg></div><div class="a" style="left:1482px;top:1006px;"><svg width="10" height="12"><path d="M1.5 1.5 L6.5 6 L1.5 10.5" stroke="#606060" stroke-width="2.6" fill="none"/></svg></div></div></body></html>
